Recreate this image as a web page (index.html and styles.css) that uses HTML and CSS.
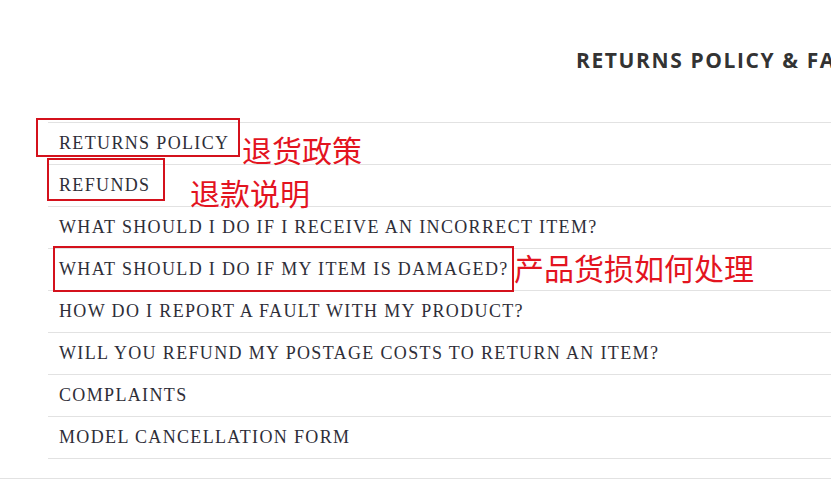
FILE: index.html
```html
<!DOCTYPE html>
<html lang="en">
<head>
    <meta charset="UTF-8">
    <meta name="viewport" content="width=device-width, initial-scale=1.0">
    <title>Returns Policy &amp; FAQ</title>
    <link rel="stylesheet" href="styles.css">
</head>
<body>

    <div class="page">
        <h2 class="page-title">RETURNS POLICY &amp; FAQ</h2>

        <ul class="faq-list">
            <li><a href="#returns">RETURNS POLICY</a></li>
            <li><a href="#refunds">REFUNDS</a></li>
            <li><a href="#incorrect">WHAT SHOULD I DO IF I RECEIVE AN INCORRECT ITEM?</a></li>
            <li><a href="#damaged">WHAT SHOULD I DO IF MY ITEM IS DAMAGED?</a></li>
            <li><a href="#fault">HOW DO I REPORT A FAULT WITH MY PRODUCT?</a></li>
            <li><a href="#postage">WILL YOU REFUND MY POSTAGE COSTS TO RETURN AN ITEM?</a></li>
            <li><a href="#complaints">COMPLAINTS</a></li>
            <li><a href="#cancel">MODEL CANCELLATION FORM</a></li>
        </ul>

        <div class="page-end"></div>

        <!-- annotations drawn over the list -->
        <div class="mark mark-1"></div>
        <div class="mark mark-2"></div>
        <div class="mark mark-3"></div>
        <span class="note note-1">退货政策</span>
        <span class="note note-2">退款说明</span>
        <span class="note note-3">产品货损如何处理</span>
    </div>

</body>
</html>
```

FILE: styles.css
```css
body {
    margin: 0;
    padding: 0;
    background-color: #fff;
    overflow: hidden;
}
.page {
    position: relative;
    width: 831px;
    height: 502px;
    overflow: hidden;
}
.page-title {
    margin: 0;
    padding: 47px 0 0 576px;
    height: 122px;
    box-sizing: border-box;
    font-family: "Open Sans", "Liberation Sans", sans-serif;
    font-weight: 700;
    font-size: 21px;
    line-height: 26px;
    letter-spacing: 1.6px;
    color: #333;
    white-space: nowrap;
    overflow: hidden;
}
.faq-list {
    list-style: none;
    margin: 0 0 0 48px;
    padding: 0;
    border-top: 1px solid #e2e2e2;
}
.faq-list li {
    height: 41px;
    border-bottom: 1px solid #e2e2e2;
    display: flex;
    align-items: center;
    padding-left: 11px;
}
.faq-list a {
    font-family: "Liberation Serif", serif;
    font-size: 18px;
    letter-spacing: 1.35px;
    color: #2e2e38;
    text-decoration: none;
    white-space: nowrap;
}
.page-end {
    margin-top: 19px;
    border-top: 1px solid #e2e2e2;
}
.mark {
    position: absolute;
    border: 2px solid #d4111c;
    box-sizing: border-box;
}
.mark-1 {
    left: 36px;
    top: 118px;
    width: 204px;
    height: 39px;
}
.mark-2 {
    left: 47px;
    top: 158px;
    width: 118px;
    height: 43px;
}
.mark-3 {
    left: 53px;
    top: 246px;
    width: 461px;
    height: 46px;
}
.note {
    position: absolute;
    font-family: "Noto Sans CJK SC", sans-serif;
    font-size: 30px;
    line-height: 1;
    color: #e3141f;
    white-space: nowrap;
}
.note-1 {
    left: 242px;
    top: 134px;
}
.note-2 {
    left: 190px;
    top: 177px;
}
.note-3 {
    left: 514px;
    top: 252px;
}
```
